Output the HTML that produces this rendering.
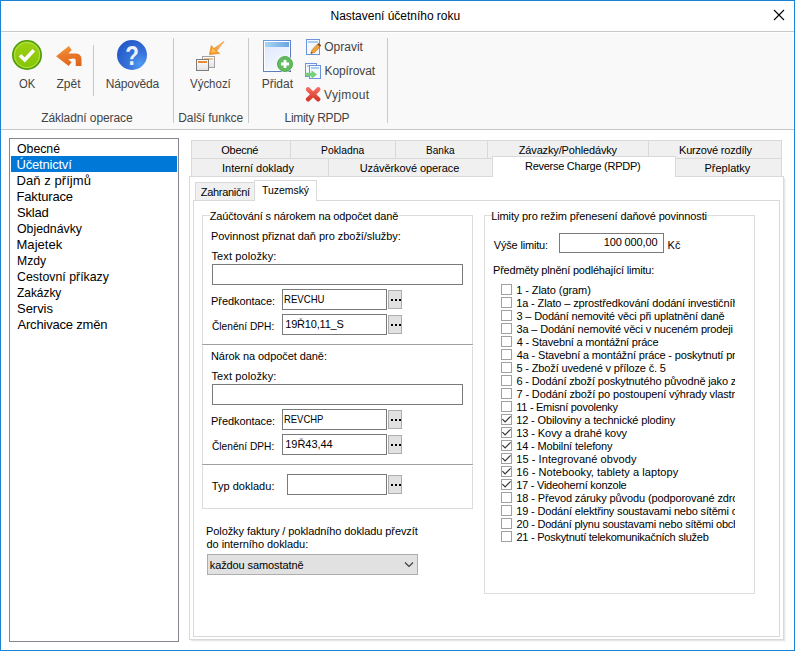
<!DOCTYPE html>
<html lang="cs"><head><meta charset="utf-8"><title>Nastavení účetního roku</title>
<style>
html,body{margin:0;padding:0;background:#fff;}
body{width:795px;height:651px;overflow:hidden;position:relative;font-family:"Liberation Sans",sans-serif;font-size:11px;color:#000;}
#win{position:absolute;left:0;top:0;width:795px;height:651px;background:#fff;overflow:hidden;}
#win div,#win span.t,#win svg{position:absolute;box-sizing:border-box;}
#win span.t{white-space:pre;line-height:normal;transform-origin:0 0;}
.ln{background:#dcdcdc;}
.inp{background:#fff;border:1px solid #7a7a7a;}
.btn{background:#e1e1e1;border:1px solid #adadad;}
.tab{background:#f0f0f0;border:1px solid #d9d9d9;}
.cb{background:#fff;border:1px solid #a0a0a0;width:11px;height:11px;}
#win span.gl{background:#fff;padding:0 2px;font-size:11px;}

</style></head><body>
<div id="win">
<span class="t" style="left:330.5px;top:9px;letter-spacing:-0.02px;font-size:12px;color:#000;">Nastavení účetního roku</span>
<svg style="left:773px;top:9px" width="12" height="12" viewBox="0 0 12 12"><path d="M1 1 L11 11 M11 1 L1 11" stroke="#000" stroke-width="1.1" fill="none"/></svg>
<div style="left:1px;top:31px;width:793px;height:1px;background:#c8c8c8"></div>
<div style="left:1px;top:32px;width:793px;height:1px;background:#fff"></div>
<div style="left:1px;top:33px;width:792px;height:96px;background:#f9f9f9"></div>
<div style="left:1px;top:129px;width:793px;height:1px;background:#c8c8c8"></div>
<div style="left:93px;top:45px;width:1px;height:51px;background:#c9c9c9"></div>
<div style="left:173px;top:38px;width:1px;height:85px;background:#c9c9c9"></div>
<div style="left:248px;top:38px;width:1px;height:85px;background:#c9c9c9"></div>
<div style="left:387px;top:38px;width:1px;height:85px;background:#c9c9c9"></div>
<svg style="left:0;top:32px" width="400" height="98" viewBox="0 32 400 98">
<defs>
<linearGradient id="gg" x1="0" y1="0" x2="0" y2="1"><stop offset="0" stop-color="#9ed212"/><stop offset="1" stop-color="#84c406"/></linearGradient>
<radialGradient id="bg" cx="0.78" cy="0.8" r="0.9"><stop offset="0" stop-color="#4f9af2"/><stop offset="0.45" stop-color="#3672da"/><stop offset="1" stop-color="#2558c8"/></radialGradient>
<linearGradient id="og" x1="0.3" y1="0" x2="0.7" y2="1"><stop offset="0" stop-color="#f29c3c"/><stop offset="0.4" stop-color="#ea7a2c"/><stop offset="1" stop-color="#e0661c"/></linearGradient>
<linearGradient id="dg" x1="0" y1="0" x2="0.6" y2="1"><stop offset="0" stop-color="#dfe9fb"/><stop offset="1" stop-color="#f6f9ff"/></linearGradient>
<linearGradient id="hb" x1="0" y1="0" x2="1" y2="0"><stop offset="0" stop-color="#a8d6f3"/><stop offset="1" stop-color="#6aa4e2"/></linearGradient>
<linearGradient id="db" x1="0" y1="0" x2="1" y2="1"><stop offset="0" stop-color="#6fa0e4"/><stop offset="1" stop-color="#5468b8"/></linearGradient>
<linearGradient id="wg" x1="0" y1="0" x2="0" y2="1"><stop offset="0" stop-color="#ffffff"/><stop offset="1" stop-color="#e2e2e2"/></linearGradient>
<linearGradient id="xg" x1="0" y1="0" x2="0" y2="1"><stop offset="0" stop-color="#f26a5c"/><stop offset="1" stop-color="#d63a2c"/></linearGradient>
<linearGradient id="ag" x1="1" y1="0" x2="0" y2="1"><stop offset="0" stop-color="#fbdcae"/><stop offset="0.5" stop-color="#f5a844"/><stop offset="1" stop-color="#f08a18"/></linearGradient>
</defs>
<!-- OK -->
<circle cx="27" cy="55" r="14.2" fill="url(#gg)" stroke="#4e9c0c" stroke-width="1.6"/>
<circle cx="27" cy="55" r="12.6" fill="none" stroke="#c3e86c" stroke-width="0.7"/>
<path d="M20 55.300 L24.800 60 L33.800 50.300" stroke="#fff" stroke-width="3.600" fill="none" stroke-linejoin="miter"/>
<!-- Zpet -->
<path d="M56.100 56.200 L68.800 46.100 L71.800 50 L68.300 53.400 L76.100 53.600 C79.500 53.800 81.500 56 81.500 59.200 L81.500 66.100 L75.700 66.100 L75.700 60.500 C75.700 59.300 75 58.700 73.500 58.600 L68.300 59.200 L71.600 62.200 L68.600 65.900 Z" fill="url(#og)"/>
<!-- Napoveda -->
<circle cx="132" cy="55" r="15" fill="url(#bg)"/>
<text transform="translate(132 65.200) scale(0.800 1)" x="0" y="0" font-family="Liberation Sans, sans-serif" font-weight="bold" font-size="28" fill="#eef0fa" text-anchor="middle">?</text>
<!-- Vychozi -->
<rect x="202.500" y="56.500" width="12" height="11" fill="url(#wg)" stroke="#a2a2a2"/>
<rect x="204" y="58" width="9" height="2" fill="#f4c08a"/>
<rect x="196.500" y="59.500" width="12" height="11" fill="url(#wg)" stroke="#7e7e7e"/>
<rect x="198" y="61" width="9" height="2" fill="#f08a30"/>
<path d="M209.400 54.600 L211.300 45.500 L213.900 48.600 L224 41.500 L216.600 51.100 L219.800 53.400 Z" fill="url(#ag)" stroke="#e8821a" stroke-width="0.600" stroke-linejoin="round"/>
<path d="M210.800 52.900 L212.300 48.300 L216.300 52 Z" fill="#fdc050"/>
<!-- Pridat -->
<rect x="263.500" y="40.500" width="27" height="31" fill="#fff" stroke="url(#db)"/>
<rect x="265" y="47" width="24" height="23" fill="url(#dg)"/>
<rect x="265" y="42" width="24" height="5" fill="url(#hb)"/>
<circle cx="285" cy="64" r="8.500" fill="#f4f8f2"/>
<circle cx="285" cy="64" r="7.500" fill="#62bb5e" stroke="#56aa52" stroke-width="1"/>
<path d="M281 64 H289 M285 60 V68" stroke="#fff" stroke-width="2.800"/>
<!-- Opravit -->
<rect x="306.500" y="39.500" width="13" height="15" fill="#f4f8ff" stroke="#6f92dc"/>
<rect x="308" y="41" width="10" height="2" fill="#a9cff0"/>
<path d="M310.800 53.600 L312 49.800 L317.300 44.200 L320 46.800 L314.800 52.400 Z" fill="#f2a23c" stroke="#b8641c" stroke-width="0.500"/>
<path d="M317.300 44.200 L318.600 42.900 L321.300 45.500 L320 46.800 Z" fill="#8a4a22"/>
<path d="M310.800 53.600 L311.300 51.800 L312.700 53 Z" fill="#444"/>
<!-- Kopirovat -->
<rect x="305.500" y="63.500" width="11" height="13" fill="#f4f8ff" stroke="#6f92dc"/>
<rect x="307" y="65" width="8" height="2" fill="#a9cff0"/>
<rect x="309.500" y="65.500" width="11" height="13" fill="#f4f8ff" stroke="#6f92dc"/>
<rect x="311" y="67" width="8" height="2" fill="#a9cff0"/>
<path d="M305.500 72.800 H311.500 V70.300 L317 74.500 L311.500 78.700 V76.200 H305.500 Z" fill="#76d07a"/>
<!-- Vyjmout -->
<path d="M308 89.300 L318.300 99.300 M318.300 89.300 L308 99.300" stroke="url(#xg)" stroke-width="4.400" stroke-linecap="round"/>
</svg>

<span class="t" style="left:19.25px;top:77px;transform:scaleX(0.9378);font-size:12px;color:#444;">OK</span>
<span class="t" style="left:56.5px;top:77px;letter-spacing:0.02px;font-size:12px;color:#444;">Zpět</span>
<span class="t" style="left:105.75px;top:77px;letter-spacing:-0.17px;font-size:12px;color:#444;">Nápověda</span>
<span class="t" style="left:190.25px;top:77px;transform:scaleX(0.956);font-size:12px;color:#444;">Výchozí</span>
<span class="t" style="left:261.75px;top:77px;letter-spacing:-0.02px;font-size:12px;color:#444;">Přidat</span>
<span class="t" style="left:324.25px;top:40px;font-size:12px;color:#444;">Opravit</span>
<span class="t" style="left:324.5px;top:64px;letter-spacing:-0.1px;font-size:12px;color:#444;">Kopírovat</span>
<span class="t" style="left:324px;top:88px;letter-spacing:0.37px;font-size:12px;color:#444;">Vyjmout</span>
<span class="t" style="left:41.25px;top:111px;letter-spacing:-0.09px;font-size:12px;color:#444;">Základní operace</span>
<span class="t" style="left:178.25px;top:111px;letter-spacing:-0.1px;font-size:12px;color:#444;">Další funkce</span>
<span class="t" style="left:284.5px;top:111px;letter-spacing:-0.29px;font-size:12px;color:#444;">Limity RPDP</span>
<div style="left:9px;top:138px;width:170px;height:504px;background:#fff;border:1px solid #828790"></div>
<span class="t" style="left:17px;top:141px;transform:scaleX(0.945);font-size:13px;color:#000;">Obecné</span>
<div style="left:11px;top:156px;width:166px;height:16px;background:#0078d7"></div>
<span class="t" style="left:16.5px;top:157px;letter-spacing:-0.2px;font-size:13px;color:#fff;">Účetnictví</span>
<span class="t" style="left:16.5px;top:173px;letter-spacing:0.07px;font-size:13px;color:#000;">Daň z příjmů</span>
<span class="t" style="left:16.5px;top:189px;letter-spacing:-0.16px;font-size:13px;color:#000;">Fakturace</span>
<span class="t" style="left:17px;top:205px;letter-spacing:-0.2px;font-size:13px;color:#000;">Sklad</span>
<span class="t" style="left:17px;top:221px;transform:scaleX(0.9469);font-size:13px;color:#000;">Objednávky</span>
<span class="t" style="left:16.5px;top:237px;letter-spacing:0.04px;font-size:13px;color:#000;">Majetek</span>
<span class="t" style="left:16.5px;top:253px;transform:scaleX(0.9377);font-size:13px;color:#000;">Mzdy</span>
<span class="t" style="left:16.75px;top:269px;transform:scaleX(0.9498);font-size:13px;color:#000;">Cestovní příkazy</span>
<span class="t" style="left:17px;top:285px;transform:scaleX(0.9153);font-size:13px;color:#000;">Zakázky</span>
<span class="t" style="left:17px;top:301px;letter-spacing:-0.03px;font-size:13px;color:#000;">Servis</span>
<span class="t" style="left:17.5px;top:317px;letter-spacing:-0.19px;font-size:13px;color:#000;">Archivace změn</span>
<div style="left:189px;top:176px;width:595px;height:464px;background:#fff;border:1px solid #d9d9d9"></div>
<div style="left:784px;top:178px;width:1px;height:463px;background:#e8e8e8"></div>
<div style="left:785px;top:179px;width:1px;height:462px;background:#f6f6f6"></div>
<div style="left:191px;top:640px;width:594px;height:1px;background:#e8e8e8"></div>
<div style="left:192px;top:641px;width:594px;height:1px;background:#f6f6f6"></div>
<div class="tab" style="left:191px;top:140px;width:100px;height:19px;"></div>
<div class="tab" style="left:290px;top:140px;width:106px;height:19px;"></div>
<div class="tab" style="left:395px;top:140px;width:93px;height:19px;"></div>
<div class="tab" style="left:487px;top:140px;width:162px;height:19px;"></div>
<div class="tab" style="left:648px;top:140px;width:134px;height:19px;"></div>
<div class="tab" style="left:191px;top:158px;width:138px;height:19px;"></div>
<div class="tab" style="left:328px;top:158px;width:166px;height:19px;"></div>
<div class="tab" style="left:675px;top:158px;width:107px;height:19px;"></div>
<div style="left:492px;top:156px;width:184px;height:21px;background:#fff;border:1px solid #d9d9d9;border-bottom:none"></div>
<span class="t" style="left:221.25px;top:144px;letter-spacing:-0.26px;">Obecné</span>
<span class="t" style="left:320.75px;top:144px;transform:scaleX(0.9407);">Pokladna</span>
<span class="t" style="left:426.25px;top:144px;transform:scaleX(0.9146);">Banka</span>
<span class="t" style="left:518.75px;top:144px;letter-spacing:-0.15px;">Závazky/Pohledávky</span>
<span class="t" style="left:679px;top:144px;letter-spacing:-0.2px;">Kurzové rozdíly</span>
<span class="t" style="left:222px;top:162px;letter-spacing:-0.02px;">Interní doklady</span>
<span class="t" style="left:359.75px;top:162px;letter-spacing:-0.08px;">Uzávěrkové operace</span>
<span class="t" style="left:525px;top:160px;letter-spacing:-0.27px;">Reverse Charge (RPDP)</span>
<span class="t" style="left:704.5px;top:162px;">Přeplatky</span>
<div style="left:193px;top:200px;width:587px;height:437px;background:#fff;border:1px solid #d9d9d9"></div>
<div class="tab" style="left:195px;top:182px;width:60px;height:19px;"></div>
<div style="left:254px;top:180px;width:63px;height:21px;background:#fff;border:1px solid #d9d9d9;border-bottom:none"></div>
<span class="t" style="left:200.75px;top:186px;letter-spacing:-0.29px;">Zahraniční</span>
<span class="t" style="left:261.5px;top:184px;transform:scaleX(0.9466);">Tuzemský</span>
<div style="left:202px;top:215px;width:271px;height:294px;border:1px solid #dcdcdc"></div>
<div style="left:210px;top:215px;width:189px;height:1px;background:#fff"></div>
<span class="t" style="left:209.75px;top:210px;letter-spacing:-0.15px;">Zaúčtování s nárokem na odpočet daně</span>
<span class="t" style="left:211px;top:230px;letter-spacing:-0.04px;">Povinnost přiznat daň pro zboží/služby:</span>
<span class="t" style="left:211.5px;top:250px;letter-spacing:0.1px;">Text položky:</span>
<div class="inp" style="left:212px;top:264px;width:251px;height:21px;"></div>
<span class="t" style="left:211px;top:295px;letter-spacing:-0.06px;">Předkontace:</span>
<div class="inp" style="left:282px;top:289px;width:105px;height:21px;"></div>
<div class="btn" style="left:388px;top:290px;width:14px;height:19px;"></div>
<span class="t" style="left:211.5px;top:320px;transform:scaleX(0.9256);">Členění DPH:</span>
<div class="inp" style="left:282px;top:314px;width:105px;height:21px;"></div>
<div class="btn" style="left:388px;top:315px;width:14px;height:19px;"></div>
<span class="t" style="left:211.5px;top:370px;letter-spacing:0.1px;">Text položky:</span>
<div class="inp" style="left:212px;top:384px;width:251px;height:21px;"></div>
<span class="t" style="left:211px;top:415px;letter-spacing:-0.06px;">Předkontace:</span>
<div class="inp" style="left:282px;top:409px;width:105px;height:21px;"></div>
<div class="btn" style="left:388px;top:410px;width:14px;height:19px;"></div>
<span class="t" style="left:211.5px;top:440px;transform:scaleX(0.9256);">Členění DPH:</span>
<div class="inp" style="left:282px;top:434px;width:105px;height:21px;"></div>
<div class="btn" style="left:388px;top:435px;width:14px;height:19px;"></div>
<span class="t" style="left:284.25px;top:293px;transform:scaleX(0.8725);">REVCHU</span>
<span class="t" style="left:285.25px;top:318px;letter-spacing:-0.19px;">19Ř10,11_S</span>
<span class="t" style="left:284.25px;top:413px;transform:scaleX(0.8589);">REVCHP</span>
<span class="t" style="left:285.25px;top:438px;letter-spacing:-0.04px;">19Ř43,44</span>
<div style="left:202px;top:344px;width:271px;height:1px;background:#a0a0a0"></div>
<div style="left:202px;top:345px;width:271px;height:1px;background:#fff"></div>
<div style="left:202px;top:464px;width:271px;height:1px;background:#a0a0a0"></div>
<div style="left:202px;top:465px;width:271px;height:1px;background:#fff"></div>
<span class="t" style="left:211px;top:350px;letter-spacing:-0.07px;">Nárok na odpočet daně:</span>
<span class="t" style="left:211.75px;top:480px;letter-spacing:0.03px;">Typ dokladu:</span>
<div class="inp" style="left:287px;top:474px;width:100px;height:21px;"></div>
<div class="btn" style="left:388px;top:475px;width:14px;height:19px;"></div>
<div style="left:391px;top:299px;width:2px;height:2px;background:#000"></div>
<div style="left:395px;top:299px;width:2px;height:2px;background:#000"></div>
<div style="left:399px;top:299px;width:2px;height:2px;background:#000"></div>
<div style="left:391px;top:324px;width:2px;height:2px;background:#000"></div>
<div style="left:395px;top:324px;width:2px;height:2px;background:#000"></div>
<div style="left:399px;top:324px;width:2px;height:2px;background:#000"></div>
<div style="left:391px;top:419px;width:2px;height:2px;background:#000"></div>
<div style="left:395px;top:419px;width:2px;height:2px;background:#000"></div>
<div style="left:399px;top:419px;width:2px;height:2px;background:#000"></div>
<div style="left:391px;top:444px;width:2px;height:2px;background:#000"></div>
<div style="left:395px;top:444px;width:2px;height:2px;background:#000"></div>
<div style="left:399px;top:444px;width:2px;height:2px;background:#000"></div>
<div style="left:391px;top:484px;width:2px;height:2px;background:#000"></div>
<div style="left:395px;top:484px;width:2px;height:2px;background:#000"></div>
<div style="left:399px;top:484px;width:2px;height:2px;background:#000"></div>
<span class="t" style="left:206px;top:525px;letter-spacing:-0.08px;">Položky faktury / pokladního dokladu převzít</span>
<span class="t" style="left:206.5px;top:538px;letter-spacing:-0.05px;">do interního dokladu:</span>
<div style="left:207px;top:554px;width:211px;height:21px;background:#e1e1e1;border:1px solid #adadad"></div>
<span class="t" style="left:209.75px;top:559px;letter-spacing:-0.1px;">každou samostatně</span>
<svg style="left:404px;top:562px" width="10" height="6" viewBox="0 0 10 6"><path d="M1 0.5 L5 4.5 L9 0.5" stroke="#404040" stroke-width="1.2" fill="none"/></svg>
<div style="left:484px;top:215px;width:271px;height:379px;border:1px solid #dcdcdc"></div>
<div style="left:492px;top:215px;width:215px;height:1px;background:#fff"></div>
<span class="t" style="left:491.25px;top:210px;letter-spacing:-0.13px;">Limity pro režim přenesení daňové povinnosti</span>
<span class="t" style="left:493.75px;top:239px;letter-spacing:-0.17px;">Výše limitu:</span>
<div class="inp" style="left:559px;top:233px;width:105px;height:20px;"></div>
<span class="t" style="left:603.75px;top:236px;letter-spacing:-0.14px;">100 000,00</span>
<span class="t" style="left:667.5px;top:239px;letter-spacing:0.06px;">Kč</span>
<span class="t" style="left:493px;top:264px;letter-spacing:-0.2px;">Předměty plnění podléhající limitu:</span>
<div style="left:0px;top:283px;width:735px;height:262px;overflow:hidden">
<div class="cb" style="left:501px;top:1px;width:11px;height:11px;"></div>
<span class="t" style="left:516.25px;top:1px;letter-spacing:-0.08px;">1 - Zlato (gram)</span>
<div class="cb" style="left:501px;top:14px;width:11px;height:11px;"></div>
<span class="t" style="left:516.25px;top:14px;letter-spacing:-0.14px;">1a - Zlato – zprostředkování dodání investičního zlata</span>
<div class="cb" style="left:501px;top:27px;width:11px;height:11px;"></div>
<span class="t" style="left:516.5px;top:27px;letter-spacing:-0.17px;">3 – Dodání nemovité věci při uplatnění daně</span>
<div class="cb" style="left:501px;top:40px;width:11px;height:11px;"></div>
<span class="t" style="left:516.5px;top:40px;letter-spacing:-0.16px;">3a – Dodání nemovité věci v nuceném prodeji</span>
<div class="cb" style="left:501px;top:53px;width:11px;height:11px;"></div>
<span class="t" style="left:516.75px;top:53px;letter-spacing:-0.2px;">4 - Stavební a montážní práce</span>
<div class="cb" style="left:501px;top:66px;width:11px;height:11px;"></div>
<span class="t" style="left:516.75px;top:66px;letter-spacing:-0.16px;">4a - Stavební a montážní práce - poskytnutí pracovníků</span>
<div class="cb" style="left:501px;top:79px;width:11px;height:11px;"></div>
<span class="t" style="left:516.5px;top:79px;letter-spacing:-0.15px;">5 - Zboží uvedené v příloze č. 5</span>
<div class="cb" style="left:501px;top:92px;width:11px;height:11px;"></div>
<span class="t" style="left:516.5px;top:92px;letter-spacing:-0.15px;">6 - Dodání zboží poskytnutého původně jako záruka</span>
<div class="cb" style="left:501px;top:105px;width:11px;height:11px;"></div>
<span class="t" style="left:516.5px;top:105px;letter-spacing:-0.13px;">7 - Dodání zboží po postoupení výhrady vlastnictví</span>
<div class="cb" style="left:501px;top:118px;width:11px;height:11px;"></div>
<span class="t" style="left:516.25px;top:118px;letter-spacing:-0.28px;">11 - Emisní povolenky</span>
<div class="cb" style="left:501px;top:131px;width:11px;height:11px;"></div>
<svg style="left:501px;top:131px" width="11" height="11" viewBox="0 0 11 11"><path d="M1.4 5.2 L4.1 8 L9.6 2.3" stroke="#383838" stroke-width="1.2" fill="none"/></svg>
<span class="t" style="left:516.25px;top:131px;letter-spacing:-0.15px;">12 - Obiloviny a technické plodiny</span>
<div class="cb" style="left:501px;top:144px;width:11px;height:11px;"></div>
<svg style="left:501px;top:144px" width="11" height="11" viewBox="0 0 11 11"><path d="M1.4 5.2 L4.1 8 L9.6 2.3" stroke="#383838" stroke-width="1.2" fill="none"/></svg>
<span class="t" style="left:516.25px;top:144px;letter-spacing:-0.08px;">13 - Kovy a drahé kovy</span>
<div class="cb" style="left:501px;top:157px;width:11px;height:11px;"></div>
<svg style="left:501px;top:157px" width="11" height="11" viewBox="0 0 11 11"><path d="M1.4 5.2 L4.1 8 L9.6 2.3" stroke="#383838" stroke-width="1.2" fill="none"/></svg>
<span class="t" style="left:516.25px;top:157px;letter-spacing:-0.14px;">14 - Mobilní telefony</span>
<div class="cb" style="left:501px;top:170px;width:11px;height:11px;"></div>
<svg style="left:501px;top:170px" width="11" height="11" viewBox="0 0 11 11"><path d="M1.4 5.2 L4.1 8 L9.6 2.3" stroke="#383838" stroke-width="1.2" fill="none"/></svg>
<span class="t" style="left:516.25px;top:170px;letter-spacing:0.07px;">15 - Integrované obvody</span>
<div class="cb" style="left:501px;top:183px;width:11px;height:11px;"></div>
<svg style="left:501px;top:183px" width="11" height="11" viewBox="0 0 11 11"><path d="M1.4 5.2 L4.1 8 L9.6 2.3" stroke="#383838" stroke-width="1.2" fill="none"/></svg>
<span class="t" style="left:516.25px;top:183px;letter-spacing:0.06px;">16 - Notebooky, tablety a laptopy</span>
<div class="cb" style="left:501px;top:196px;width:11px;height:11px;"></div>
<svg style="left:501px;top:196px" width="11" height="11" viewBox="0 0 11 11"><path d="M1.4 5.2 L4.1 8 L9.6 2.3" stroke="#383838" stroke-width="1.2" fill="none"/></svg>
<span class="t" style="left:516.25px;top:196px;letter-spacing:-0.25px;">17 - Videoherní konzole</span>
<div class="cb" style="left:501px;top:209px;width:11px;height:11px;"></div>
<span class="t" style="left:516.25px;top:209px;letter-spacing:-0.11px;">18 - Převod záruky původu (podporované zdroje)</span>
<div class="cb" style="left:501px;top:222px;width:11px;height:11px;"></div>
<span class="t" style="left:516.25px;top:222px;letter-spacing:-0.17px;">19 - Dodání elektřiny soustavami nebo sítěmi obchodníkovi</span>
<div class="cb" style="left:501px;top:235px;width:11px;height:11px;"></div>
<span class="t" style="left:516.5px;top:235px;letter-spacing:-0.22px;">20 - Dodání plynu soustavami nebo sítěmi obchodníkovi</span>
<div class="cb" style="left:501px;top:248px;width:11px;height:11px;"></div>
<span class="t" style="left:516.5px;top:248px;letter-spacing:-0.26px;">21 - Poskytnutí telekomunikačních služeb</span>
</div>
<div style="left:0px;top:0px;width:795px;height:651px;border:1px solid #1883d7;pointer-events:none"></div>
</div>
</body></html>
